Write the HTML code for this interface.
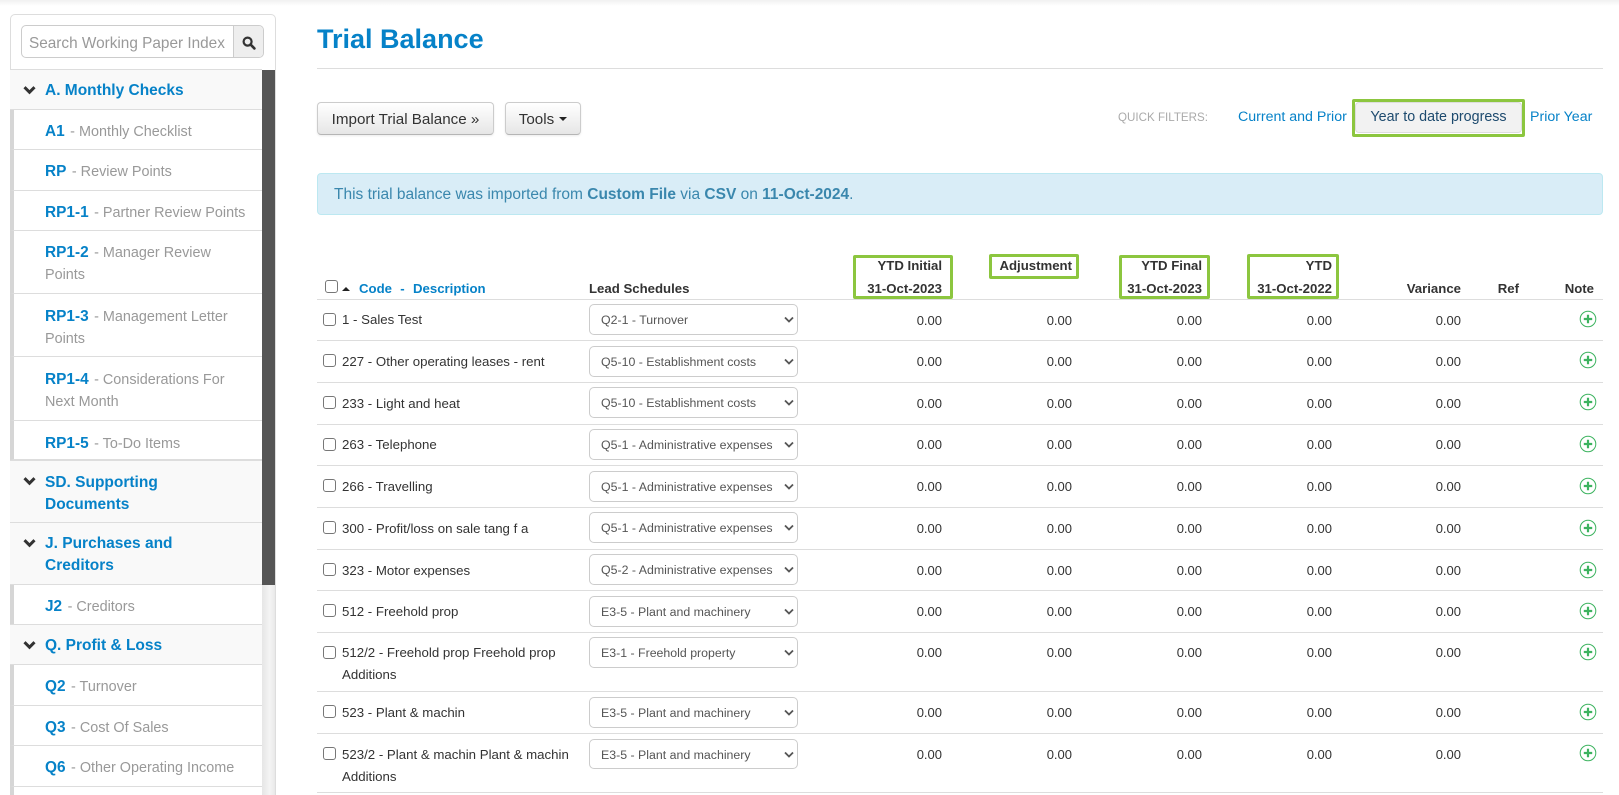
<!DOCTYPE html>
<html lang="en"><head><meta charset="utf-8"><title>Trial Balance</title>
<style>
*{box-sizing:border-box}
html,body{margin:0;padding:0;width:1619px;height:795px;overflow:hidden;background:#fff;font-family:"Liberation Sans",sans-serif;color:#333}
#page{position:relative;width:1619px;height:795px;overflow:hidden;background:#fff}
.a{position:absolute}
#top{left:0;top:0;width:1619px;height:6px;background:linear-gradient(#f1f1f1,#fff)}
#side{left:10px;top:14px;width:266px;height:800px;border:1px solid #ddd;border-radius:5px;background:#fff}
#search{left:21px;top:25px;width:243px;height:33px;border:1px solid #ccc;border-radius:5px;overflow:hidden;background:#fff}
#search span{position:absolute;left:7px;top:8px;font-size:15.35px;line-height:20px;color:#999;white-space:nowrap}
#search i{position:absolute;right:0;top:0;width:30px;height:31px;background:#eee;border-left:1px solid #ccc}
#bar{left:262px;top:70px;width:13px;height:515px;background:#555}
#track{left:262px;top:585px;width:13px;height:210px;background:linear-gradient(90deg,#e6e6e6,#f4f4f4 60%,#e8e8e8)}
.s{position:absolute;left:10px;width:252px;background:#f9f9f9;border-bottom:1px solid #ddd;border-top:1px solid #ddd;padding:10px 0 0 35px;font-size:15.5px;line-height:22px;font-weight:bold;color:#0682c8}
.s svg{position:absolute;left:13px;top:16px}
.n{position:absolute;left:10px;width:252px;border-left:4px solid #d6d6d6;border-bottom:1px solid #ddd;padding:11px 4px 0 31px;font-size:14.4px;line-height:22px;color:#999}
.n b{color:#0682c8;font-size:15.4px;margin-right:1.5px}
h1{position:absolute;left:317px;top:22px;margin:0;font-size:27px;line-height:34px;font-weight:bold;color:#0682c8;white-space:nowrap}
#hr{left:317px;top:68px;width:1286px;height:1px;background:#ddd}
.btn{position:absolute;top:102px;height:33px;border:1px solid #ccc;border-bottom-color:#b5b5b5;border-radius:4px;background:linear-gradient(#fff,#e6e6e6);font-size:15.2px;line-height:33px;color:#333;text-align:center;white-space:nowrap;box-shadow:0 1px 2px rgba(0,0,0,.08)}
.car{display:inline-block;border-left:4px solid transparent;border-right:4px solid transparent;border-top:4px solid #222;vertical-align:3px;margin-left:5px}
.ql{position:absolute;top:107px;font-size:14.2px;line-height:20px;color:#0682c8;white-space:nowrap}
#qf{left:1118px;top:109px;font-size:11.6px;line-height:17px;color:#aaa;white-space:nowrap}
#ytdb{left:1355px;top:102px;width:167px;height:31px;background:#f2f2f2;border:1px solid #ddd;border-radius:4px;font-size:14.3px;line-height:29px;text-align:center;color:#1d4a6e;white-space:nowrap}
.g{position:absolute;border:3px solid #8cc63f;border-radius:2px}
#alert{left:317px;top:173px;width:1286px;height:42px;background:#d9edf7;border:1px solid #bce8f1;border-radius:4px;padding:11px 16px;font-size:15.5px;line-height:20px;color:#3a87ad;white-space:nowrap}
.h{position:absolute;font-size:13.2px;line-height:23px;font-weight:bold;color:#333;white-space:nowrap;text-align:right}
.cb{position:absolute;width:13px;height:13px;border:1px solid #777;border-radius:3px;background:#fff}
.r{position:absolute;left:317px;width:1286px;border-bottom:1px solid #ddd}
.r .t{position:absolute;left:25px;top:10px;width:240px;white-space:nowrap;font-size:13.25px;line-height:22px;color:#333}
.r .sel{position:absolute;left:272px;top:4px;width:209px;height:31px;border:1px solid #ccc;border-radius:5px;font-size:12.35px;line-height:30px;padding-left:11px;color:#555;white-space:nowrap;background:#fff}
.r .sel svg{position:absolute;right:2px;top:11px}
.r .cb{left:6px;top:13px}
.r .v{position:absolute;top:10px;font-size:13px;line-height:22px;color:#333;text-align:right;width:60px}
.r.u .t,.r.u .v{top:9px}
.r .v1{left:565px}.r .v2{left:695px}.r .v3{left:825px}.r .v4{left:955px}.r .v5{left:1084px}
.r svg.p{position:absolute;left:1261.5px;top:10px}
</style></head><body>
<div id="page">
<div class="a" id="top"></div>
<div class="a" id="side"></div>
<div class="a" id="search"><span>Search Working Paper Index</span><i><svg width="14" height="14" viewBox="0 0 14 14" style="position:absolute;left:8px;top:10px"><circle cx="5.6" cy="5.6" r="4" fill="none" stroke="#333" stroke-width="2.2"/><path d="M8.6 8.6L12.4 12.4" stroke="#333" stroke-width="2.6" stroke-linecap="round"/></svg></i></div>

<div class="s" style="top:69px;height:41px"><svg width="13" height="9" viewBox="0 0 13 9"><path d="M1.5 1.2L6.5 6.2L11.5 1.2" fill="none" stroke="#333" stroke-width="3"/></svg>A. Monthly Checks</div>
<div class="n" style="top:110px;height:40px"><b>A1</b> - Monthly Checklist</div>
<div class="n" style="top:150px;height:41px"><b>RP</b> - Review Points</div>
<div class="n" style="top:191px;height:40px"><b>RP1-1</b> - Partner Review Points</div>
<div class="n" style="top:231px;height:63px"><b>RP1-2</b> - Manager Review<br>Points</div>
<div class="n" style="top:294px;height:63px;padding-top:12px"><b>RP1-3</b> - Management Letter<br>Points</div>
<div class="n" style="top:357px;height:64px;padding-top:12px"><b>RP1-4</b> - Considerations For<br>Next Month</div>
<div class="n" style="top:421px;height:39px;padding-top:12px"><b>RP1-5</b> - To-Do Items</div>
<div class="s" style="top:460px;height:63px;padding-top:11px"><svg width="13" height="9" viewBox="0 0 13 9"><path d="M1.5 1.2L6.5 6.2L11.5 1.2" fill="none" stroke="#333" stroke-width="3"/></svg>SD. Supporting<br>Documents</div>
<div class="s" style="top:522px;height:63px"><svg width="13" height="9" viewBox="0 0 13 9"><path d="M1.5 1.2L6.5 6.2L11.5 1.2" fill="none" stroke="#333" stroke-width="3"/></svg>J. Purchases and<br>Creditors</div>
<div class="n" style="top:585px;height:40px"><b>J2</b> - Creditors</div>
<div class="s" style="top:624px;height:41px"><svg width="13" height="9" viewBox="0 0 13 9"><path d="M1.5 1.2L6.5 6.2L11.5 1.2" fill="none" stroke="#333" stroke-width="3"/></svg>Q. Profit &amp; Loss</div>
<div class="n" style="top:665px;height:41px"><b>Q2</b> - Turnover</div>
<div class="n" style="top:706px;height:40px"><b>Q3</b> - Cost Of Sales</div>
<div class="n" style="top:746px;height:41px"><b>Q6</b> - Other Operating Income</div>
<div class="n" style="top:787px;height:20px"></div>
<div class="a" id="bar"></div><div class="a" id="track"></div>

<h1>Trial Balance</h1>
<div class="a" id="hr"></div>
<div class="btn" style="left:317px;width:177px">Import Trial Balance »</div>
<div class="btn" style="left:505px;width:76px">Tools<span class="car"></span></div>
<div class="a" id="qf">QUICK FILTERS:</div>
<div class="ql" style="left:1238px">Current and Prior</div>
<div class="a" id="ytdb">Year to date progress</div>
<div class="g" style="left:1352px;top:99px;width:173px;height:38px"></div>
<div class="ql" style="left:1530px">Prior Year</div>
<div class="a" id="alert">This trial balance was imported from <b>Custom File</b> via <b>CSV</b> on <b>11-Oct-2024</b>.</div>

<div class="cb" style="left:325px;top:280px"></div>
<div class="a" style="left:342px;top:287px;border-left:4px solid transparent;border-right:4px solid transparent;border-bottom:4px solid #222;width:0;height:0"></div>
<div class="h" style="left:359px;top:277px;color:#0682c8;word-spacing:.5px">Code &nbsp;-&nbsp; Description</div>
<div class="h" style="left:589px;top:277px">Lead Schedules</div>
<div class="h" style="left:842px;width:100px;top:254px">YTD Initial<br>31-Oct-2023</div>
<div class="h" style="left:972px;width:100px;top:254px">Adjustment</div>
<div class="h" style="left:1102px;width:100px;top:254px">YTD Final<br>31-Oct-2023</div>
<div class="h" style="left:1232px;width:100px;top:254px">YTD<br>31-Oct-2022</div>
<div class="h" style="left:1361px;width:100px;top:277px">Variance</div>
<div class="h" style="left:1459px;width:60px;top:277px">Ref</div>
<div class="h" style="left:1534px;width:60px;top:277px">Note</div>
<div class="g" style="left:853px;top:255px;width:100px;height:44px"></div>
<div class="g" style="left:989px;top:254px;width:90px;height:25px"></div>
<div class="g" style="left:1119px;top:255px;width:91px;height:44px"></div>
<div class="g" style="left:1247px;top:254px;width:92px;height:45px"></div>
<div class="a" style="left:317px;top:299px;width:1286px;height:1px;background:#ddd"></div>

<div class="r" style="top:300px;height:41px"><span class="cb"></span><div class="t" style="top:9px">1 - Sales Test</div><div class="sel">Q2-1 - Turnover<svg width="12" height="8" viewBox="0 0 12 8"><path d="M2 1.5L6 5.5L10 1.5" fill="none" stroke="#555" stroke-width="1.8"/></svg></div><div class="v v1">0.00</div><div class="v v2">0.00</div><div class="v v3">0.00</div><div class="v v4">0.00</div><div class="v v5">0.00</div><svg class="p" width="18" height="18" viewBox="0 0 18 18"><circle cx="9" cy="9" r="7.8" fill="none" stroke="#3cb35f" stroke-width="1"/><path d="M9 4.8V13.2M4.8 9H13.2" stroke="#3cb35f" stroke-width="2.2"/></svg></div>
<div class="r" style="top:341px;height:42px"><span class="cb"></span><div class="t">227 - Other operating leases - rent</div><div class="sel" style="top:5px">Q5-10 - Establishment costs<svg width="12" height="8" viewBox="0 0 12 8"><path d="M2 1.5L6 5.5L10 1.5" fill="none" stroke="#555" stroke-width="1.8"/></svg></div><div class="v v1">0.00</div><div class="v v2">0.00</div><div class="v v3">0.00</div><div class="v v4">0.00</div><div class="v v5">0.00</div><svg class="p" width="18" height="18" viewBox="0 0 18 18"><circle cx="9" cy="9" r="7.8" fill="none" stroke="#3cb35f" stroke-width="1"/><path d="M9 4.8V13.2M4.8 9H13.2" stroke="#3cb35f" stroke-width="2.2"/></svg></div>
<div class="r" style="top:383px;height:42px"><span class="cb"></span><div class="t">233 - Light and heat</div><div class="sel">Q5-10 - Establishment costs<svg width="12" height="8" viewBox="0 0 12 8"><path d="M2 1.5L6 5.5L10 1.5" fill="none" stroke="#555" stroke-width="1.8"/></svg></div><div class="v v1">0.00</div><div class="v v2">0.00</div><div class="v v3">0.00</div><div class="v v4">0.00</div><div class="v v5">0.00</div><svg class="p" width="18" height="18" viewBox="0 0 18 18"><circle cx="9" cy="9" r="7.8" fill="none" stroke="#3cb35f" stroke-width="1"/><path d="M9 4.8V13.2M4.8 9H13.2" stroke="#3cb35f" stroke-width="2.2"/></svg></div>
<div class="r u" style="top:425px;height:41px"><span class="cb"></span><div class="t">263 - Telephone</div><div class="sel">Q5-1 - Administrative expenses<svg width="12" height="8" viewBox="0 0 12 8"><path d="M2 1.5L6 5.5L10 1.5" fill="none" stroke="#555" stroke-width="1.8"/></svg></div><div class="v v1">0.00</div><div class="v v2">0.00</div><div class="v v3">0.00</div><div class="v v4">0.00</div><div class="v v5">0.00</div><svg class="p" width="18" height="18" viewBox="0 0 18 18"><circle cx="9" cy="9" r="7.8" fill="none" stroke="#3cb35f" stroke-width="1"/><path d="M9 4.8V13.2M4.8 9H13.2" stroke="#3cb35f" stroke-width="2.2"/></svg></div>
<div class="r" style="top:466px;height:42px"><span class="cb"></span><div class="t">266 - Travelling</div><div class="sel" style="top:5px">Q5-1 - Administrative expenses<svg width="12" height="8" viewBox="0 0 12 8"><path d="M2 1.5L6 5.5L10 1.5" fill="none" stroke="#555" stroke-width="1.8"/></svg></div><div class="v v1">0.00</div><div class="v v2">0.00</div><div class="v v3">0.00</div><div class="v v4">0.00</div><div class="v v5">0.00</div><svg class="p" style="top:11px" width="18" height="18" viewBox="0 0 18 18"><circle cx="9" cy="9" r="7.8" fill="none" stroke="#3cb35f" stroke-width="1"/><path d="M9 4.8V13.2M4.8 9H13.2" stroke="#3cb35f" stroke-width="2.2"/></svg></div>
<div class="r" style="top:508px;height:42px"><span class="cb"></span><div class="t">300 - Profit/loss on sale tang f a</div><div class="sel">Q5-1 - Administrative expenses<svg width="12" height="8" viewBox="0 0 12 8"><path d="M2 1.5L6 5.5L10 1.5" fill="none" stroke="#555" stroke-width="1.8"/></svg></div><div class="v v1">0.00</div><div class="v v2">0.00</div><div class="v v3">0.00</div><div class="v v4">0.00</div><div class="v v5">0.00</div><svg class="p" style="top:11px" width="18" height="18" viewBox="0 0 18 18"><circle cx="9" cy="9" r="7.8" fill="none" stroke="#3cb35f" stroke-width="1"/><path d="M9 4.8V13.2M4.8 9H13.2" stroke="#3cb35f" stroke-width="2.2"/></svg></div>
<div class="r" style="top:550px;height:41px"><span class="cb"></span><div class="t">323 - Motor expenses</div><div class="sel">Q5-2 - Administrative expenses<svg width="12" height="8" viewBox="0 0 12 8"><path d="M2 1.5L6 5.5L10 1.5" fill="none" stroke="#555" stroke-width="1.8"/></svg></div><div class="v v1">0.00</div><div class="v v2">0.00</div><div class="v v3">0.00</div><div class="v v4">0.00</div><div class="v v5">0.00</div><svg class="p" style="top:11px" width="18" height="18" viewBox="0 0 18 18"><circle cx="9" cy="9" r="7.8" fill="none" stroke="#3cb35f" stroke-width="1"/><path d="M9 4.8V13.2M4.8 9H13.2" stroke="#3cb35f" stroke-width="2.2"/></svg></div>
<div class="r" style="top:591px;height:42px"><span class="cb"></span><div class="t">512 - Freehold prop</div><div class="sel" style="top:5px">E3-5 - Plant and machinery<svg width="12" height="8" viewBox="0 0 12 8"><path d="M2 1.5L6 5.5L10 1.5" fill="none" stroke="#555" stroke-width="1.8"/></svg></div><div class="v v1">0.00</div><div class="v v2">0.00</div><div class="v v3">0.00</div><div class="v v4">0.00</div><div class="v v5">0.00</div><svg class="p" style="top:11px" width="18" height="18" viewBox="0 0 18 18"><circle cx="9" cy="9" r="7.8" fill="none" stroke="#3cb35f" stroke-width="1"/><path d="M9 4.8V13.2M4.8 9H13.2" stroke="#3cb35f" stroke-width="2.2"/></svg></div>
<div class="r u" style="top:633px;height:59px"><span class="cb"></span><div class="t">512/2 - Freehold prop Freehold prop<br>Additions</div><div class="sel">E3-1 - Freehold property<svg width="12" height="8" viewBox="0 0 12 8"><path d="M2 1.5L6 5.5L10 1.5" fill="none" stroke="#555" stroke-width="1.8"/></svg></div><div class="v v1">0.00</div><div class="v v2">0.00</div><div class="v v3">0.00</div><div class="v v4">0.00</div><div class="v v5">0.00</div><svg class="p" width="18" height="18" viewBox="0 0 18 18"><circle cx="9" cy="9" r="7.8" fill="none" stroke="#3cb35f" stroke-width="1"/><path d="M9 4.8V13.2M4.8 9H13.2" stroke="#3cb35f" stroke-width="2.2"/></svg></div>
<div class="r" style="top:692px;height:42px"><span class="cb"></span><div class="t">523 - Plant &amp; machin</div><div class="sel" style="top:5px">E3-5 - Plant and machinery<svg width="12" height="8" viewBox="0 0 12 8"><path d="M2 1.5L6 5.5L10 1.5" fill="none" stroke="#555" stroke-width="1.8"/></svg></div><div class="v v1">0.00</div><div class="v v2">0.00</div><div class="v v3">0.00</div><div class="v v4">0.00</div><div class="v v5">0.00</div><svg class="p" style="top:11px" width="18" height="18" viewBox="0 0 18 18"><circle cx="9" cy="9" r="7.8" fill="none" stroke="#3cb35f" stroke-width="1"/><path d="M9 4.8V13.2M4.8 9H13.2" stroke="#3cb35f" stroke-width="2.2"/></svg></div>
<div class="r" style="top:734px;height:59px"><span class="cb"></span><div class="t">523/2 - Plant &amp; machin Plant &amp; machin<br>Additions</div><div class="sel" style="top:5px;height:30px">E3-5 - Plant and machinery<svg width="12" height="8" viewBox="0 0 12 8"><path d="M2 1.5L6 5.5L10 1.5" fill="none" stroke="#555" stroke-width="1.8"/></svg></div><div class="v v1">0.00</div><div class="v v2">0.00</div><div class="v v3">0.00</div><div class="v v4">0.00</div><div class="v v5">0.00</div><svg class="p" width="18" height="18" viewBox="0 0 18 18"><circle cx="9" cy="9" r="7.8" fill="none" stroke="#3cb35f" stroke-width="1"/><path d="M9 4.8V13.2M4.8 9H13.2" stroke="#3cb35f" stroke-width="2.2"/></svg></div>
</div>
</body></html>
